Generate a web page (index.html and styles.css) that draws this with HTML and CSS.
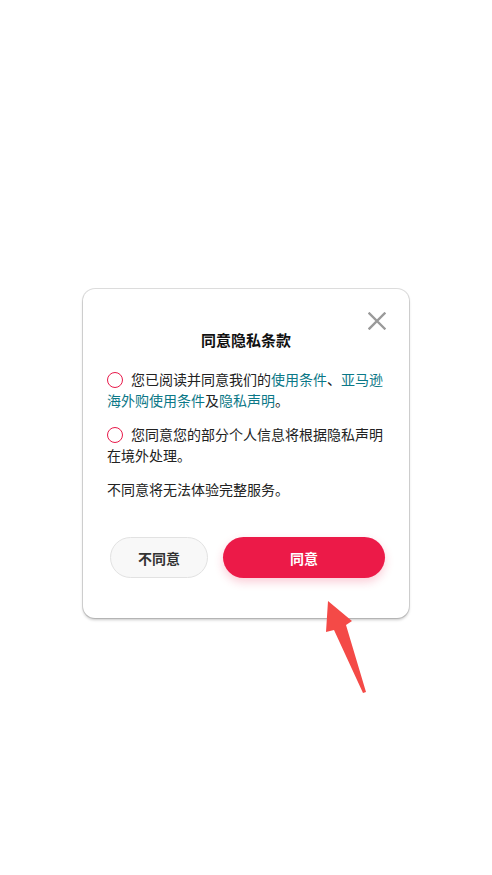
FILE: index.html
```html
<!DOCTYPE html>
<html lang="zh-CN">
<head>
<meta charset="utf-8">
<title>同意隐私条款</title>
<link rel="stylesheet" href="styles.css">
</head>
<body>
<div class="page">
  <div class="card">
    <button class="close" aria-label="关闭">
      <svg viewBox="0 0 18 18" width="18" height="18"><path d="M1.5 1.5 L16.5 16.5 M16.5 1.5 L1.5 16.5" stroke="#9a9a9a" stroke-width="2.4" fill="none" stroke-linecap="square"/></svg>
    </button>
    <h2 class="title">同意隐私条款</h2>
    <p class="item"><span class="radio"></span>您已阅读并同意我们的<a class="link">使用条件</a>、<a class="link">亚马逊</a><a class="link">海外购使用条件</a>及<a class="link">隐私声明</a>。</p>
    <p class="item"><span class="radio"></span>您同意您的部分个人信息将根据隐私声明在境外处理。</p>
    <p class="item note">不同意将无法体验完整服务。</p>
    <div class="actions">
      <button class="btn btn-decline">不同意</button>
      <button class="btn btn-agree">同意</button>
    </div>
  </div>
  <svg class="arrow" viewBox="0 0 492 875" width="492" height="875"><polygon points="328,601 352,621 346,625 366,692 363,693 334,630 326,632" fill="#f44a47"/></svg>
</div>
</body>
</html>
```
FILE: styles.css
```css
html, body {
  margin: 0;
  padding: 0;
  background: #ffffff;
}
body {
  font-family: "Noto Sans CJK SC", "Noto Sans", sans-serif;
  color: #222222;
}
.page {
  position: relative;
  width: 492px;
  height: 875px;
  padding-top: 289px;
  box-sizing: border-box;
}
.card {
  position: relative;
  width: 326px;
  margin: 0 auto;
  box-sizing: border-box;
  padding: 40px 24px 40px;
  background: #ffffff;
  border-radius: 12px;
  box-shadow: 0 0 0 1px rgba(0,0,0,0.13), 0 2px 3px rgba(0,0,0,0.22);
}
.close {
  position: absolute;
  top: 23px;
  right: 23px;
  width: 18px;
  height: 18px;
  padding: 0;
  border: 0;
  background: none;
  display: flex;
}
.title {
  margin: 0;
  text-align: center;
  font-size: 15px;
  line-height: 22px;
  font-weight: 700;
  color: #111111;
}
.item {
  margin: 14px 0 0;
  font-size: 14px;
  line-height: 20.5px;
}
.title + .item {
  margin-top: 18px;
}
.radio {
  display: inline-block;
  box-sizing: border-box;
  width: 16px;
  height: 16px;
  border: 1.6px solid #e8194a;
  border-radius: 50%;
  margin-right: 8px;
  vertical-align: -3px;
}
.link {
  color: #0b7887;
  text-decoration: none;
}
.actions {
  display: flex;
  gap: 15px;
  margin-top: 37.5px;
  padding-left: 3px;
}
.btn {
  height: 41px;
  border-radius: 21px;
  font-family: "Noto Sans CJK SC", "Noto Sans", sans-serif;
  font-size: 14px;
  font-weight: 700;
  padding: 0;
}
.btn-decline {
  width: 98px;
  background: #f8f8f8;
  border: 1px solid #e2e2e2;
  color: #333333;
}
.btn-agree {
  flex: 1;
  background: #ec1a48;
  border: 0;
  color: #ffffff;
  box-shadow: 0 4px 10px rgba(236,26,72,0.22);
}
.arrow {
  position: absolute;
  left: 0;
  top: 0;
  pointer-events: none;
}
```
